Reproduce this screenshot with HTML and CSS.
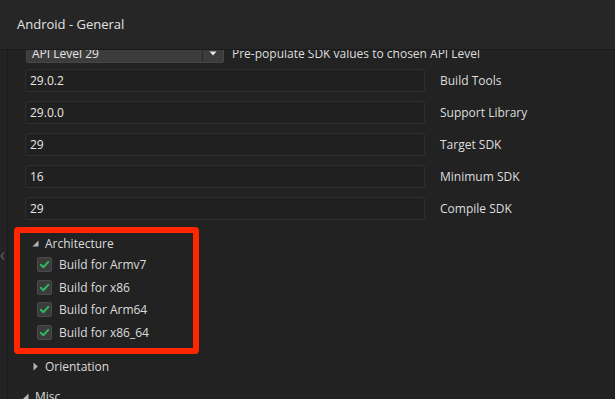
FILE: index.html
```html
<!DOCTYPE html>
<html>
<head>
<meta charset="utf-8">
<link rel="stylesheet" href="styles.css">
</head>
<body>
<div class="header"><span class="title">Android - General</span></div>
<div class="main">
  <div class="gutter">
    <svg class="gutter-arrow" width="5" height="8" viewBox="0 0 5 8"><path d="M4 0.5 L1 4 L4 7.5" fill="none" stroke="#5c5c5c" stroke-width="1.2"/></svg>
  </div>
  <div class="content">
    <div class="select-row">
      <div class="select">
        <span class="select-text">API Level 29</span>
        <span class="select-btn"><svg width="8" height="5" viewBox="0 0 8 5"><path d="M0.5 0.5 L7.5 0.5 L4 4.5 Z" fill="#e6e6e6"/></svg></span>
      </div>
      <span class="label">Pre-populate SDK values to chosen API Level</span>
    </div>
    <div class="field-row"><div class="input">29.0.2</div><span class="label">Build Tools</span></div>
    <div class="field-row"><div class="input">29.0.0</div><span class="label">Support Library</span></div>
    <div class="field-row"><div class="input">29</div><span class="label">Target SDK</span></div>
    <div class="field-row"><div class="input">16</div><span class="label">Minimum SDK</span></div>
    <div class="field-row"><div class="input">29</div><span class="label">Compile SDK</span></div>

    <div class="highlight">
      <div class="group-head">
        <svg class="tri" width="7" height="7" viewBox="0 0 7 7"><path d="M6.5 0.5 L6.5 6.5 L0.5 6.5 Z" fill="#b4b4b4"/></svg>
        <span>Architecture</span>
      </div>
      <div class="check-row"><span class="box"><svg width="13" height="13" viewBox="0 0 13 13"><path d="M2.8 6.8 L5.3 9.2 L10.3 3.9" fill="none" stroke="#2fb85d" stroke-width="2" stroke-linecap="round" stroke-linejoin="round"/></svg></span><span>Build for Armv7</span></div>
      <div class="check-row"><span class="box"><svg width="13" height="13" viewBox="0 0 13 13"><path d="M2.8 6.8 L5.3 9.2 L10.3 3.9" fill="none" stroke="#2fb85d" stroke-width="2" stroke-linecap="round" stroke-linejoin="round"/></svg></span><span>Build for x86</span></div>
      <div class="check-row"><span class="box"><svg width="13" height="13" viewBox="0 0 13 13"><path d="M2.8 6.8 L5.3 9.2 L10.3 3.9" fill="none" stroke="#2fb85d" stroke-width="2" stroke-linecap="round" stroke-linejoin="round"/></svg></span><span>Build for Arm64</span></div>
      <div class="check-row"><span class="box"><svg width="13" height="13" viewBox="0 0 13 13"><path d="M2.8 6.8 L5.3 9.2 L10.3 3.9" fill="none" stroke="#2fb85d" stroke-width="2" stroke-linecap="round" stroke-linejoin="round"/></svg></span><span>Build for x86_64</span></div>
    </div>

    <div class="group-row orient">
      <svg class="tri" width="5" height="9" viewBox="0 0 5 9"><path d="M0.5 0.5 L4.8 4.5 L0.5 8.5 Z" fill="#b4b4b4"/></svg>
      <span>Orientation</span>
    </div>
    <div class="group-row misc">
      <svg class="tri" width="7" height="7" viewBox="0 0 7 7"><path d="M6.5 0.5 L6.5 6.5 L0.5 6.5 Z" fill="#b4b4b4"/></svg>
      <span>Misc</span>
    </div>
  </div>
</div>
</body>
</html>
```

FILE: styles.css
```css
* { box-sizing: border-box; }
html, body {
  margin: 0;
  padding: 0;
}
body {
  width: 615px;
  height: 399px;
  overflow: hidden;
  background: #222222;
  color: #dcdcdc;
  font-family: "Open Sans", "Noto Sans", sans-serif;
  font-size: 12px;
  position: relative;
}
.header {
  position: relative;
  z-index: 2;
  height: 50px;
  background: #262626;
  border-bottom: 1px solid #1b1b1b;
  padding-left: 17px;
  display: flex;
  align-items: center;
}
.title {
  font-size: 13px;
  color: #e2e2e2;
  margin-top: -1px;
}
.main {
  display: flex;
  height: 349px;
}
.gutter {
  width: 8px;
  flex: none;
  border-right: 1px solid #1a1a1a;
  background: #232323;
  display: flex;
  flex-direction: column;
  padding-top: 202px;
  padding-left: 0;
}
.gutter-arrow { display: block; }
.content {
  flex: 1;
  padding-left: 17px;
  margin-top: -7px;
  overflow: hidden;
}
.select-row {
  display: flex;
  align-items: center;
  height: 20px;
  margin-left: 1px;
}
.select {
  width: 198px;
  height: 20px;
  background: #3c3c3c;
  border: 1px solid #474747;
  border-radius: 2px;
  display: flex;
  align-items: center;
}
.select-text {
  flex: 1;
  padding-left: 5px;
  color: #e4e4e4;
}
.select-btn {
  width: 21px;
  height: 18px;
  border-left: 1px solid #2a2a2a;
  display: flex;
  align-items: center;
  justify-content: center;
}
.select-row .label { margin-left: 8px; }
.field-row {
  display: flex;
  align-items: center;
  margin-top: 6px;
}
.field-row + .field-row { margin-top: 9px; }
.input {
  width: 400px;
  height: 23px;
  background: #202020;
  border: 1px solid #2e2e2e;
  border-radius: 2px;
  padding-left: 4px;
  display: flex;
  align-items: center;
  color: #e6e6e6;
}
.field-row .label { margin-left: 15px; }
.label { color: #dedede; }

.highlight {
  margin-top: 7px;
  margin-left: -11px;
  width: 185px;
  border: 6px solid #ff2600;
  border-radius: 4px;
  padding: 0 0 4px 12px;
}
.group-head {
  display: flex;
  align-items: center;
  height: 20px;
}
.group-head .tri { margin-right: 6px; }
.check-row {
  display: flex;
  align-items: center;
  height: 22.7px;
  padding-left: 5px;
}
.box {
  width: 15px;
  height: 15px;
  background: #3b3b3b;
  border: 1px solid #4a4a4a;
  border-radius: 2px;
  display: flex;
  align-items: center;
  justify-content: center;
  margin-right: 7px;
}
.box svg { display: block; }
.group-row {
  display: flex;
  align-items: center;
  height: 26px;
}
.orient {
  padding-left: 8px;
}
.orient .tri { margin-right: 7px; }
.misc {
  margin-left: -3px;
  margin-top: 4px;
}
.misc .tri { margin-right: 6px; }
```
